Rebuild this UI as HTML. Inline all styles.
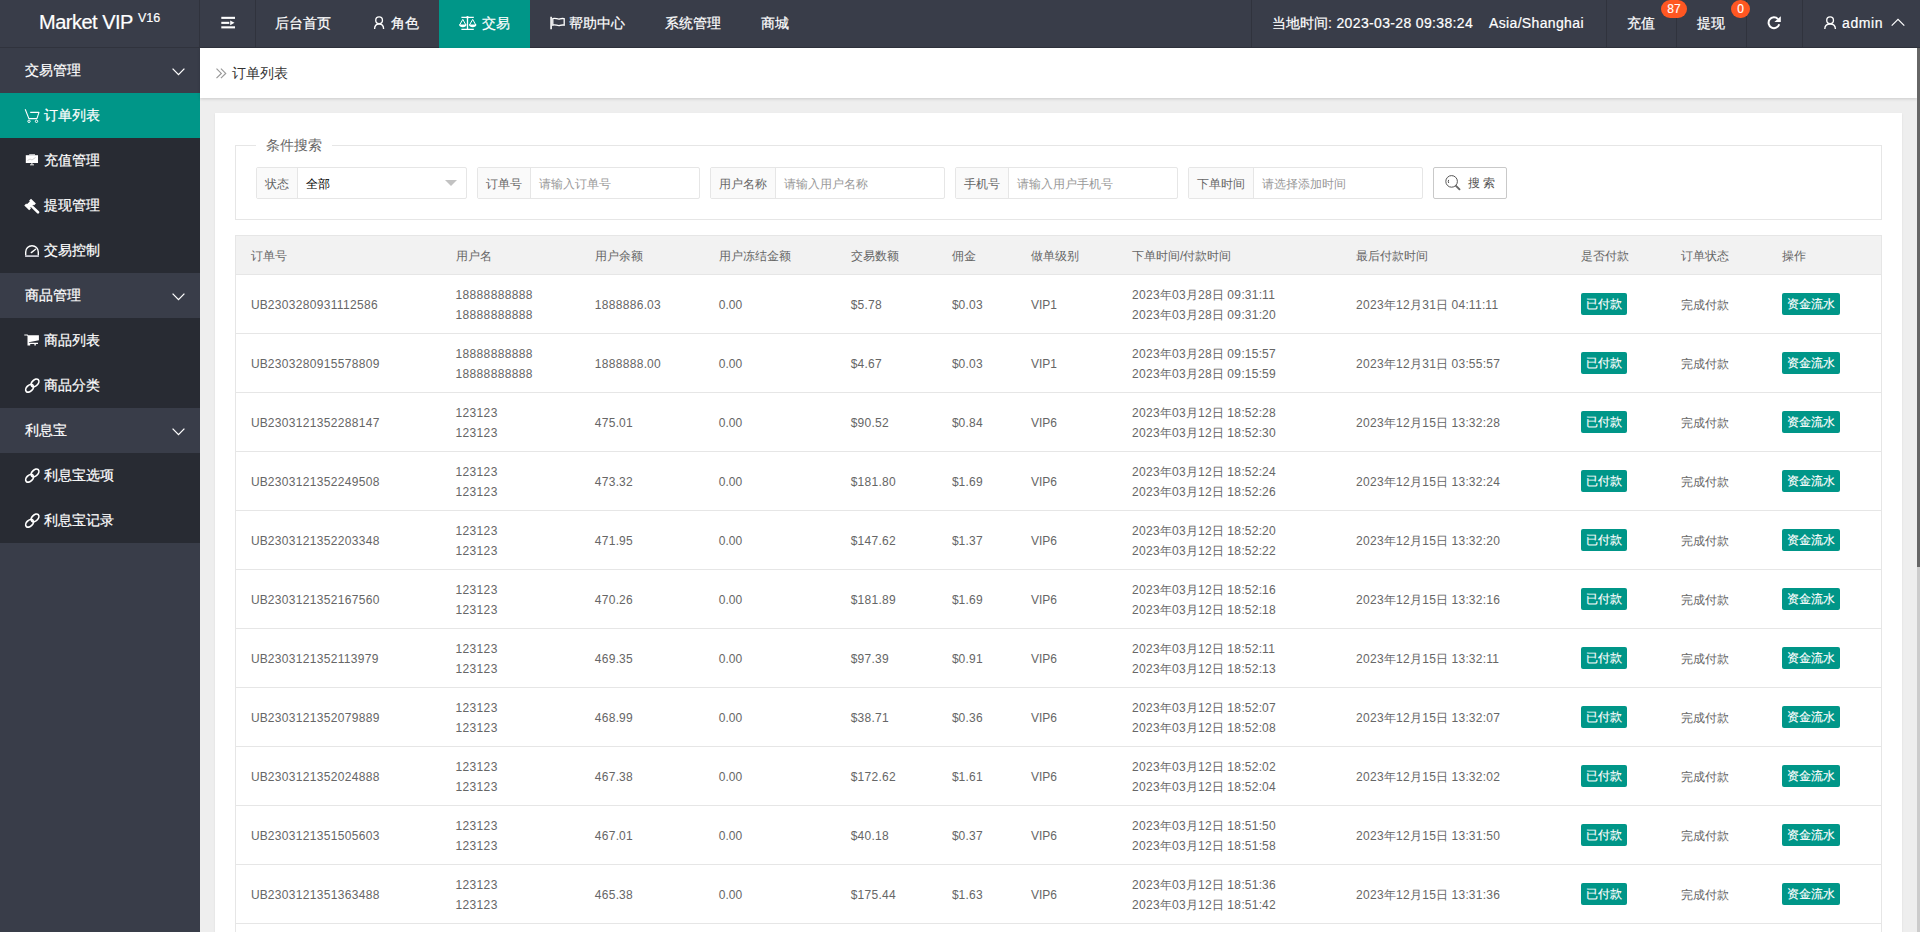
<!DOCTYPE html>
<html><head><meta charset="utf-8"><title>订单列表</title>
<style>
*{margin:0;padding:0;box-sizing:border-box}
html,body{width:1920px;height:932px;overflow:hidden}
body{position:relative;background:#eeeeee;font-family:"Liberation Sans",sans-serif;font-size:14px;color:#333}
.abs{position:absolute}
svg{display:block}
/* header */
#hd{position:absolute;left:0;top:0;width:1920px;height:48px;background:#393D49;border-bottom:1px solid #30333d}
.logo{position:absolute;left:0;top:0;width:200px;height:48px;}
.logo .t{position:absolute;left:39px;top:10px;font-size:20px;color:#fff;white-space:nowrap;line-height:24px;letter-spacing:-.5px}
.logo .v{position:absolute;left:138px;top:11px;font-size:12.5px;color:#fff;line-height:14px}
.sep{position:absolute;top:0;width:1px;height:47px;background:#30333d}
.nt{position:absolute;top:15px;color:#fff;font-size:14px;line-height:17px;white-space:nowrap}
.active{position:absolute;left:439px;top:0;width:91px;height:48px;background:#009688}
.badge{position:absolute;top:0;height:18px;border-radius:9px;background:#FF5722;color:#fff;font-size:12px;line-height:19px;text-align:center;z-index:2}
/* side */
#side{position:absolute;left:0;top:48px;width:200px;height:884px;background:#393D49}
.sg{position:absolute;left:0;width:200px;height:45px}
.sg .tx{position:absolute;left:25px;top:14px;color:#fff;font-size:14px;line-height:17px;white-space:nowrap}
.sc{position:absolute;left:0;width:200px;background:#282B33}
.si{position:absolute;left:0;width:200px;height:45px}
.si .tx{position:absolute;left:44px;top:14px;color:#fff;font-size:14px;line-height:17px;white-space:nowrap}
.si svg,.sg svg{position:absolute}
/* body */
#crumb{position:absolute;left:200px;top:48px;width:1717px;height:50px;background:#fff;box-shadow:0 1px 3px rgba(0,0,0,.15)}
#crumb .tx{position:absolute;left:32px;top:17px;font-size:14px;color:#333;line-height:17px}
#scroll{position:absolute;left:1917px;top:48px;width:3px;height:884px;background:#cccccc}
#thumb{position:absolute;left:1917px;top:48px;width:3px;height:519px;background:#666}
#card{position:absolute;left:215px;top:113px;width:1687px;height:830px;background:#fff;box-shadow:0 1px 2px rgba(0,0,0,.08)}
#fs{position:absolute;left:235px;top:145px;width:1647px;height:75px;border:1px solid #e6e6e6}
#legend{position:absolute;left:256px;top:136px;width:76px;height:18px;background:#fff}
#legend .tx{position:absolute;left:10px;top:0;font-size:14px;color:#666;line-height:18px;white-space:nowrap}
.ig{position:absolute;top:167px;height:32px;border:1px solid #e6e6e6;border-radius:2px;background:#fff}
.ig .lb{position:absolute;left:0;top:0;height:30px;padding-top:1px;background:#fafafa;border-right:1px solid #e6e6e6;font-size:12px;color:#666;line-height:30px;text-align:center;white-space:nowrap}
.ig .ph{position:absolute;top:1px;font-size:12px;color:#999;line-height:30px;white-space:nowrap}
#sbtn{position:absolute;left:1433px;top:167px;width:74px;height:32px;border:1px solid #c9c9c9;border-radius:2px;background:#fff}
#sbtn .tx{position:absolute;left:34px;top:0;font-size:12px;color:#555;line-height:30px;white-space:nowrap;word-spacing:0px}
/* table */
#tb{position:absolute;left:235px;top:235px;width:1647px;border-collapse:collapse;table-layout:fixed;font-size:12px;color:#666}
#tb th,#tb td{border:1px solid #e6e6e6;padding:0 15px;text-align:left;font-weight:normal;white-space:nowrap;overflow:hidden}
#tb th{height:39px;background:#f2f2f2;color:#666;line-height:20px;padding-top:1px;padding-bottom:0}
#tb td{height:59px;line-height:20px;border-left:none;border-right:none;padding-top:2px;padding-bottom:0}
#tb th{border-left:none;border-right:none}
#tb tr th:first-child,#tb tr td:first-child{border-left:1px solid #e6e6e6}
#tb tr th:last-child,#tb tr td:last-child{border-right:1px solid #e6e6e6}
.btn{position:relative;top:-1px;display:inline-block;height:22px;line-height:22px;padding:0 5px;background:#009688;color:#fff;border-radius:2px;font-size:12px;vertical-align:middle}
#tb i{font-style:normal;letter-spacing:.33px}
.ls{letter-spacing:.35px}
.nt,.sg .tx,.si .tx,.logo .t,.logo .v{-webkit-text-stroke:0.2px #fff}
.btn,.badge{-webkit-text-stroke:0.15px #fff}

</style></head>
<body>
<div id="hd">
  <div class="logo"><span class="t">Market VIP</span><span class="v">V16</span></div>
  <div class="sep" style="left:199px"></div>
  <svg class="abs" style="left:221px;top:16px" width="15" height="14" viewBox="0 0 15 14"><rect x="0.3" y="0.8" width="13.7" height="2.1" fill="#fff"/><rect x="0.3" y="5.8" width="8" height="2.1" fill="#fff"/><path d="M9.2 4.5 L13.5 6.85 L9.2 9.2Z" fill="#fff"/><rect x="0.3" y="10.3" width="13.7" height="2.1" fill="#fff"/></svg>
  <div class="sep" style="left:255px"></div>
  <span class="nt" style="left:275px">后台首页</span>
  <svg class="abs" style="left:372px;top:15px" width="14" height="15" viewBox="0 0 14 15"><circle cx="7.1" cy="5.2" r="3.35" fill="none" stroke="#fff" stroke-width="1.35"/><path d="M2.6 13.9 C2.6 10.6 4.6 9 7.1 9 C9.6 9 11.6 10.6 11.6 13.9" fill="none" stroke="#fff" stroke-width="1.35"/></svg>
  <span class="nt" style="left:391px">角色</span>
  <div class="active"></div>
  <svg class="abs" style="left:458px;top:15px" width="19" height="16" viewBox="0 0 19 16"><path d="M3.4 2.4 H15.8 M9.5 2.4 V14.4 M3.4 14.4 H15.8" stroke="#fff" stroke-width="1.3" fill="none"/><circle cx="9.5" cy="2.2" r="1.2" fill="#fff"/><path d="M4.8 4.4 L1.6 10 M4.8 4.4 L7.9 10 M14.7 4.4 L11.5 10 M14.7 4.4 L17.8 10" stroke="#fff" stroke-width="1" fill="none"/><path d="M1 9.6 H8.6 C8.4 11.4 6.9 12.3 4.8 12.3 C2.7 12.3 1.2 11.4 1 9.6Z M10.9 9.6 H18.5 C18.3 11.4 16.8 12.3 14.7 12.3 C12.6 12.3 11.1 11.4 10.9 9.6Z" fill="#fff"/></svg>
  <span class="nt" style="left:482px">交易</span>
  <svg class="abs" style="left:549px;top:16px" width="17" height="14" viewBox="0 0 17 14"><path d="M2.1 0.8 V13.2" stroke="#fff" stroke-width="1.6"/><path d="M3.8 2.6 C6.5 1.4 8.5 3.8 11 2.9 C12.3 2.4 13.4 2.3 15.2 2.7 V9.2 C13.4 8.8 12.3 8.9 11 9.4 C8.5 10.3 6.5 7.9 3.8 9.1 Z" fill="none" stroke="#fff" stroke-width="1.3"/></svg>
  <span class="nt" style="left:569px">帮助中心</span>
  <span class="nt" style="left:665px">系统管理</span>
  <span class="nt" style="left:761px">商城</span>

  <div class="sep" style="left:1251px"></div>
  <span class="nt" style="left:1272px">当地时间<span class="ls" style="letter-spacing:.35px">: 2023-03-28 09:38:24</span></span><span class="nt ls" style="left:1489px">Asia/Shanghai</span>
  <div class="sep" style="left:1606px"></div>
  <span class="nt" style="left:1627px">充值</span>
    <div class="sep" style="left:1676px"></div>
  <span class="nt" style="left:1697px">提现</span>
    <div class="sep" style="left:1746px"></div>
  <svg class="abs" style="left:1766px;top:15px" width="16" height="16" viewBox="0 0 16 16"><path d="M13.2 9.2 A5.4 5.4 0 1 1 12 4.1" fill="none" stroke="#fff" stroke-width="2"/><path d="M14.8 1.2 V7.1 H8.4 Z" fill="#fff"/></svg>
  <div class="sep" style="left:1802px"></div>
  <svg class="abs" style="left:1823px;top:15px" width="14" height="15" viewBox="0 0 14 15"><circle cx="7.1" cy="5.2" r="3.35" fill="none" stroke="#fff" stroke-width="1.35"/><path d="M1.8 13.9 C1.8 10.6 4.2 9 7.1 9 C10 9 12.4 10.6 12.4 13.9" fill="none" stroke="#fff" stroke-width="1.35"/></svg>
  <span class="nt" style="left:1842px;letter-spacing:.6px">admin</span>
  <span class="badge" style="left:1661px;width:26px">87</span><span class="badge" style="left:1731px;width:19px">0</span>
  <svg class="abs" style="left:1891px;top:18px" width="14" height="9" viewBox="0 0 14 9"><path d="M0.7 7.6 L7 1.4 L13.3 7.6" fill="none" stroke="#fff" stroke-width="1.2"/></svg>
</div>

<div id="side">
  <div class="sg" style="top:0"><span class="tx">交易管理</span><svg style="left:172px;top:20px" width="13" height="8" viewBox="0 0 13 8"><path d="M0.6 0.6 L6.5 6.6 L12.4 0.6" fill="none" stroke="#fff" stroke-width="1.3"/></svg></div>
  <div class="sc" style="top:45px;height:180px"></div>
  <div class="si" style="top:45px;width:200px;background:#009688"><svg style="left:24px;top:15px" width="16" height="16" viewBox="0 0 16 16"><path d="M1.2 1.2 L4.9 10.6 H12.9 L15 4.4 H6.2" fill="none" stroke="#fff" stroke-width="1.1" stroke-linejoin="round"/><circle cx="5" cy="13.3" r="1.2" fill="none" stroke="#fff" stroke-width="1"/><circle cx="12.5" cy="13.3" r="1.2" fill="none" stroke="#fff" stroke-width="1"/></svg><span class="tx">订单列表</span></div>
  <div class="si" style="top:90px"><svg style="left:25px;top:154px;top:16px" width="14" height="12" viewBox="0 0 14 12"><rect x="0.8" y="1.2" width="12.2" height="7.8" fill="#fff"/><rect x="4.2" y="0.2" width="5.8" height="1.2" fill="#fff" opacity=".85"/><path d="M2.5 6.5 L5 5 L7 6 L10.5 3.5" stroke="#bbb" stroke-width=".7" fill="none"/><rect x="6.4" y="9" width="1" height="1.6" fill="#fff"/><rect x="5" y="10.4" width="4" height="0.9" fill="#fff"/></svg><span class="tx">充值管理</span></div>
  <div class="si" style="top:135px"><svg style="left:24px;top:15px" width="16" height="16" viewBox="0 0 16 16"><path d="M7 0.8 L11.9 5.4 L9.9 7.4 L9.2 6.8 L6.3 9.7 L7 10.4 L5.2 12.3 L0.3 7.5 L2.2 5.6 L2.9 6.3 L5.8 3.4 L5.1 2.7 Z" fill="#fff"/><path d="M8.2 8.6 L14 14.3" stroke="#fff" stroke-width="2.6" stroke-linecap="round"/></svg><span class="tx">提现管理</span></div>
  <div class="si" style="top:180px"><svg style="left:24px;top:15px" width="16" height="15" viewBox="0 0 16 15"><path d="M1.7 12.4 V9 A6.3 6.3 0 0 1 14.3 9 V12.4" fill="none" stroke="#fff" stroke-width="1.4"/><rect x="1.1" y="12.2" width="13.8" height="1.8" fill="#c8c8d0"/><path d="M7.3 9.6 L11.6 6.3" stroke="#fff" stroke-width="1.4" stroke-linecap="round"/></svg><span class="tx">交易控制</span></div>
  <div class="sg" style="top:225px"><span class="tx">商品管理</span><svg style="left:172px;top:20px" width="13" height="8" viewBox="0 0 13 8"><path d="M0.6 0.6 L6.5 6.6 L12.4 0.6" fill="none" stroke="#fff" stroke-width="1.3"/></svg></div>
  <div class="sc" style="top:270px;height:90px"></div>
  <div class="si" style="top:270px"><svg style="left:24px;top:16px" width="16" height="14" viewBox="0 0 16 14"><path d="M0.3 0.4 H3.6 L4.2 1.3 H14.9 V6.3 L4.8 8.2 L4.9 8.8 H14 V10.1 H11.8 V11.6 H10.4 V10.1 H6.2 V11.6 H3.5 V2 L3.1 1.6 H0.3Z" fill="#fff"/></svg><span class="tx">商品列表</span></div>
  <div class="si" style="top:315px"><svg style="left:24px;top:14px" width="17" height="17" viewBox="0 0 17 17"><ellipse cx="5.6" cy="11.3" rx="4.6" ry="3" transform="rotate(-45 5.6 11.3)" fill="none" stroke="#fff" stroke-width="1.7"/><ellipse cx="11" cy="5.9" rx="4.6" ry="3" transform="rotate(-45 11 5.9)" fill="none" stroke="#fff" stroke-width="1.7"/></svg><span class="tx">商品分类</span></div>
  <div class="sg" style="top:360px"><span class="tx">利息宝</span><svg style="left:172px;top:20px" width="13" height="8" viewBox="0 0 13 8"><path d="M0.6 0.6 L6.5 6.6 L12.4 0.6" fill="none" stroke="#fff" stroke-width="1.3"/></svg></div>
  <div class="sc" style="top:405px;height:90px"></div>
  <div class="si" style="top:405px"><svg style="left:24px;top:14px" width="17" height="17" viewBox="0 0 17 17"><ellipse cx="5.6" cy="11.3" rx="4.6" ry="3" transform="rotate(-45 5.6 11.3)" fill="none" stroke="#fff" stroke-width="1.7"/><ellipse cx="11" cy="5.9" rx="4.6" ry="3" transform="rotate(-45 11 5.9)" fill="none" stroke="#fff" stroke-width="1.7"/></svg><span class="tx">利息宝选项</span></div>
  <div class="si" style="top:450px"><svg style="left:24px;top:14px" width="17" height="17" viewBox="0 0 17 17"><ellipse cx="5.6" cy="11.3" rx="4.6" ry="3" transform="rotate(-45 5.6 11.3)" fill="none" stroke="#fff" stroke-width="1.7"/><ellipse cx="11" cy="5.9" rx="4.6" ry="3" transform="rotate(-45 11 5.9)" fill="none" stroke="#fff" stroke-width="1.7"/></svg><span class="tx">利息宝记录</span></div>
</div>

<div id="crumb"><svg class="abs" style="left:16px;top:20px" width="11" height="11" viewBox="0 0 11 11"><path d="M0.5 0.6 L5.3 5.4 L0.5 10.2 M4.9 0.6 L9.7 5.4 L4.9 10.2" fill="none" stroke="#999" stroke-width="1.2"/></svg><span class="tx">订单列表</span></div>
<div id="scroll"></div><div id="thumb"></div>

<div id="card"></div>
<div id="fs"></div>
<div id="legend"><span class="tx">条件搜索</span></div>

<div class="ig" style="left:256px;width:211px"><span class="lb" style="width:41px">状态</span><span class="ph" style="left:49px;color:#000">全部</span><svg class="abs" style="left:188px;top:12px" width="12" height="6" viewBox="0 0 12 6"><path d="M0 0 H12 L6 6Z" fill="#c2c2c2"/></svg></div>
<div class="ig" style="left:477px;width:223px"><span class="lb" style="width:53px">订单号</span><span class="ph" style="left:61px">请输入订单号</span></div>
<div class="ig" style="left:710px;width:235px"><span class="lb" style="width:65px">用户名称</span><span class="ph" style="left:73px">请输入用户名称</span></div>
<div class="ig" style="left:955px;width:223px"><span class="lb" style="width:53px">手机号</span><span class="ph" style="left:61px">请输入用户手机号</span></div>
<div class="ig" style="left:1188px;width:235px"><span class="lb" style="width:65px">下单时间</span><span class="ph" style="left:73px">请选择添加时间</span></div>
<div id="sbtn"><svg class="abs" style="left:11px;top:6px" width="18" height="18" viewBox="0 0 18 18"><circle cx="6.6" cy="7.4" r="5.8" fill="none" stroke="#555" stroke-width="1"/><path d="M3.7 5.9 A3.2 3.2 0 0 0 3.7 9" fill="none" stroke="#555" stroke-width="1"/><path d="M11 11.8 L14.5 15.3" stroke="#666" stroke-width="1.9" stroke-linecap="round"/></svg><span class="tx">搜&nbsp;索</span></div>

<table id="tb"><colgroup><col style="width:205px"><col style="width:139px"><col style="width:124px"><col style="width:132px"><col style="width:101px"><col style="width:79px"><col style="width:101px"><col style="width:224px"><col style="width:225px"><col style="width:100px"><col style="width:101px"><col style="width:114px"></colgroup><thead><tr><th>订单号</th><th>用户名</th><th>用户余额</th><th>用户冻结金额</th><th>交易数额</th><th>佣金</th><th>做单级别</th><th>下单时间/付款时间</th><th>最后付款时间</th><th>是否付款</th><th>订单状态</th><th>操作</th></tr></thead><tbody>
<tr><td>UB<i>2303280931112586</i></td><td><div class="l2"><i>18888888888</i><br><i>18888888888</i></div></td><td><i>1888886</i>.<i>03</i></td><td>0.00</td><td>$<i>5</i>.<i>78</i></td><td>$<i>0</i>.<i>03</i></td><td>VIP<i>1</i></td><td><div class="l2"><i>2023</i>年<i>03</i>月<i>28</i>日 <i>09</i>:<i>31</i>:<i>11</i><br><i>2023</i>年<i>03</i>月<i>28</i>日 <i>09</i>:<i>31</i>:<i>20</i></div></td><td><i>2023</i>年<i>12</i>月<i>31</i>日 <i>04</i>:<i>11</i>:<i>11</i></td><td><span class="btn">已付款</span></td><td>完成付款</td><td><span class="btn">资金流水</span></td></tr>
<tr><td>UB<i>2303280915578809</i></td><td><div class="l2"><i>18888888888</i><br><i>18888888888</i></div></td><td><i>1888888</i>.<i>00</i></td><td>0.00</td><td>$<i>4</i>.<i>67</i></td><td>$<i>0</i>.<i>03</i></td><td>VIP<i>1</i></td><td><div class="l2"><i>2023</i>年<i>03</i>月<i>28</i>日 <i>09</i>:<i>15</i>:<i>57</i><br><i>2023</i>年<i>03</i>月<i>28</i>日 <i>09</i>:<i>15</i>:<i>59</i></div></td><td><i>2023</i>年<i>12</i>月<i>31</i>日 <i>03</i>:<i>55</i>:<i>57</i></td><td><span class="btn">已付款</span></td><td>完成付款</td><td><span class="btn">资金流水</span></td></tr>
<tr><td>UB<i>2303121352288147</i></td><td><div class="l2"><i>123123</i><br><i>123123</i></div></td><td><i>475</i>.<i>01</i></td><td>0.00</td><td>$<i>90</i>.<i>52</i></td><td>$<i>0</i>.<i>84</i></td><td>VIP<i>6</i></td><td><div class="l2"><i>2023</i>年<i>03</i>月<i>12</i>日 <i>18</i>:<i>52</i>:<i>28</i><br><i>2023</i>年<i>03</i>月<i>12</i>日 <i>18</i>:<i>52</i>:<i>30</i></div></td><td><i>2023</i>年<i>12</i>月<i>15</i>日 <i>13</i>:<i>32</i>:<i>28</i></td><td><span class="btn">已付款</span></td><td>完成付款</td><td><span class="btn">资金流水</span></td></tr>
<tr><td>UB<i>2303121352249508</i></td><td><div class="l2"><i>123123</i><br><i>123123</i></div></td><td><i>473</i>.<i>32</i></td><td>0.00</td><td>$<i>181</i>.<i>80</i></td><td>$<i>1</i>.<i>69</i></td><td>VIP<i>6</i></td><td><div class="l2"><i>2023</i>年<i>03</i>月<i>12</i>日 <i>18</i>:<i>52</i>:<i>24</i><br><i>2023</i>年<i>03</i>月<i>12</i>日 <i>18</i>:<i>52</i>:<i>26</i></div></td><td><i>2023</i>年<i>12</i>月<i>15</i>日 <i>13</i>:<i>32</i>:<i>24</i></td><td><span class="btn">已付款</span></td><td>完成付款</td><td><span class="btn">资金流水</span></td></tr>
<tr><td>UB<i>2303121352203348</i></td><td><div class="l2"><i>123123</i><br><i>123123</i></div></td><td><i>471</i>.<i>95</i></td><td>0.00</td><td>$<i>147</i>.<i>62</i></td><td>$<i>1</i>.<i>37</i></td><td>VIP<i>6</i></td><td><div class="l2"><i>2023</i>年<i>03</i>月<i>12</i>日 <i>18</i>:<i>52</i>:<i>20</i><br><i>2023</i>年<i>03</i>月<i>12</i>日 <i>18</i>:<i>52</i>:<i>22</i></div></td><td><i>2023</i>年<i>12</i>月<i>15</i>日 <i>13</i>:<i>32</i>:<i>20</i></td><td><span class="btn">已付款</span></td><td>完成付款</td><td><span class="btn">资金流水</span></td></tr>
<tr><td>UB<i>2303121352167560</i></td><td><div class="l2"><i>123123</i><br><i>123123</i></div></td><td><i>470</i>.<i>26</i></td><td>0.00</td><td>$<i>181</i>.<i>89</i></td><td>$<i>1</i>.<i>69</i></td><td>VIP<i>6</i></td><td><div class="l2"><i>2023</i>年<i>03</i>月<i>12</i>日 <i>18</i>:<i>52</i>:<i>16</i><br><i>2023</i>年<i>03</i>月<i>12</i>日 <i>18</i>:<i>52</i>:<i>18</i></div></td><td><i>2023</i>年<i>12</i>月<i>15</i>日 <i>13</i>:<i>32</i>:<i>16</i></td><td><span class="btn">已付款</span></td><td>完成付款</td><td><span class="btn">资金流水</span></td></tr>
<tr><td>UB<i>2303121352113979</i></td><td><div class="l2"><i>123123</i><br><i>123123</i></div></td><td><i>469</i>.<i>35</i></td><td>0.00</td><td>$<i>97</i>.<i>39</i></td><td>$<i>0</i>.<i>91</i></td><td>VIP<i>6</i></td><td><div class="l2"><i>2023</i>年<i>03</i>月<i>12</i>日 <i>18</i>:<i>52</i>:<i>11</i><br><i>2023</i>年<i>03</i>月<i>12</i>日 <i>18</i>:<i>52</i>:<i>13</i></div></td><td><i>2023</i>年<i>12</i>月<i>15</i>日 <i>13</i>:<i>32</i>:<i>11</i></td><td><span class="btn">已付款</span></td><td>完成付款</td><td><span class="btn">资金流水</span></td></tr>
<tr><td>UB<i>2303121352079889</i></td><td><div class="l2"><i>123123</i><br><i>123123</i></div></td><td><i>468</i>.<i>99</i></td><td>0.00</td><td>$<i>38</i>.<i>71</i></td><td>$<i>0</i>.<i>36</i></td><td>VIP<i>6</i></td><td><div class="l2"><i>2023</i>年<i>03</i>月<i>12</i>日 <i>18</i>:<i>52</i>:<i>07</i><br><i>2023</i>年<i>03</i>月<i>12</i>日 <i>18</i>:<i>52</i>:<i>08</i></div></td><td><i>2023</i>年<i>12</i>月<i>15</i>日 <i>13</i>:<i>32</i>:<i>07</i></td><td><span class="btn">已付款</span></td><td>完成付款</td><td><span class="btn">资金流水</span></td></tr>
<tr><td>UB<i>2303121352024888</i></td><td><div class="l2"><i>123123</i><br><i>123123</i></div></td><td><i>467</i>.<i>38</i></td><td>0.00</td><td>$<i>172</i>.<i>62</i></td><td>$<i>1</i>.<i>61</i></td><td>VIP<i>6</i></td><td><div class="l2"><i>2023</i>年<i>03</i>月<i>12</i>日 <i>18</i>:<i>52</i>:<i>02</i><br><i>2023</i>年<i>03</i>月<i>12</i>日 <i>18</i>:<i>52</i>:<i>04</i></div></td><td><i>2023</i>年<i>12</i>月<i>15</i>日 <i>13</i>:<i>32</i>:<i>02</i></td><td><span class="btn">已付款</span></td><td>完成付款</td><td><span class="btn">资金流水</span></td></tr>
<tr><td>UB<i>2303121351505603</i></td><td><div class="l2"><i>123123</i><br><i>123123</i></div></td><td><i>467</i>.<i>01</i></td><td>0.00</td><td>$<i>40</i>.<i>18</i></td><td>$<i>0</i>.<i>37</i></td><td>VIP<i>6</i></td><td><div class="l2"><i>2023</i>年<i>03</i>月<i>12</i>日 <i>18</i>:<i>51</i>:<i>50</i><br><i>2023</i>年<i>03</i>月<i>12</i>日 <i>18</i>:<i>51</i>:<i>58</i></div></td><td><i>2023</i>年<i>12</i>月<i>15</i>日 <i>13</i>:<i>31</i>:<i>50</i></td><td><span class="btn">已付款</span></td><td>完成付款</td><td><span class="btn">资金流水</span></td></tr>
<tr><td>UB<i>2303121351363488</i></td><td><div class="l2"><i>123123</i><br><i>123123</i></div></td><td><i>465</i>.<i>38</i></td><td>0.00</td><td>$<i>175</i>.<i>44</i></td><td>$<i>1</i>.<i>63</i></td><td>VIP<i>6</i></td><td><div class="l2"><i>2023</i>年<i>03</i>月<i>12</i>日 <i>18</i>:<i>51</i>:<i>36</i><br><i>2023</i>年<i>03</i>月<i>12</i>日 <i>18</i>:<i>51</i>:<i>42</i></div></td><td><i>2023</i>年<i>12</i>月<i>15</i>日 <i>13</i>:<i>31</i>:<i>36</i></td><td><span class="btn">已付款</span></td><td>完成付款</td><td><span class="btn">资金流水</span></td></tr>
<tr><td>UB<i>2303121351222222</i></td><td><div class="l2"><i>123123</i><br><i>123123</i></div></td><td><i>463</i>.<i>00</i></td><td>0.00</td><td>$<i>100</i>.<i>00</i></td><td>$<i>1</i>.<i>00</i></td><td>VIP<i>6</i></td><td><div class="l2"><i>2023</i>年<i>03</i>月<i>12</i>日 <i>18</i>:<i>51</i>:<i>20</i><br><i>2023</i>年<i>03</i>月<i>12</i>日 <i>18</i>:<i>51</i>:<i>22</i></div></td><td><i>2023</i>年<i>12</i>月<i>15</i>日 <i>13</i>:<i>31</i>:<i>20</i></td><td><span class="btn">已付款</span></td><td>完成付款</td><td><span class="btn">资金流水</span></td></tr>
</tbody></table>

</body></html>
